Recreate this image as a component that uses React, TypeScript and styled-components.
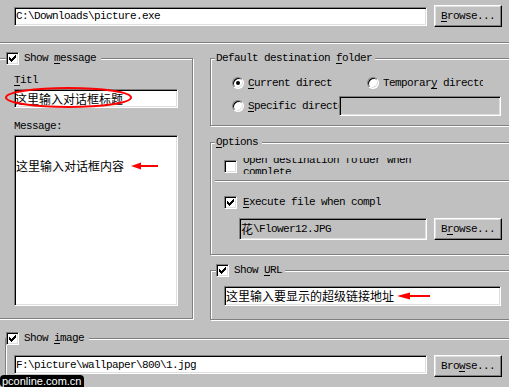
import React from "react";
import styled, { createGlobalStyle } from "styled-components";

const FACE = "#c0c0c0";
const SHADOW = "#808080";
const LATIN = `"Liberation Mono", "DejaVu Sans Mono", monospace`;
const CJK = `"Noto Sans CJK SC", "Noto Sans CJK TC", sans-serif`;

const GlobalStyle = createGlobalStyle`
  html, body {
    margin: 0;
    padding: 0;
    background: ${FACE};
  }
  body {
    width: 509px;
    height: 387px;
    overflow: hidden;
  }
`;

const Dialog = styled.div`
  position: relative;
  width: 509px;
  height: 387px;
  overflow: hidden;
  background: ${FACE};
  color: #000;
  font-family: ${LATIN};
  font-size: 11px;
  letter-spacing: -0.6px;
  line-height: 14px;
`;

const Cjk = styled.span`
  font-family: ${CJK};
  font-size: 12px;
  letter-spacing: 0;
`;

const Key = styled.u`
  text-decoration: underline;
  text-underline-offset: 2px;
`;

const TopBar = styled.div`
  display: flex;
  align-items: center;
  gap: 7px;
  padding: 5px 0 0 14px;
`;

const Separator = styled.div<{ $mt?: number; $ml?: number }>`
  height: 0;
  margin: ${(p) => p.$mt ?? 0}px 0 0 ${(p) => p.$ml ?? 0}px;
  border-top: 1px solid ${SHADOW};
  border-bottom: 1px solid #fff;
`;

const TextBox = styled.div<{ $w: number; $h: number; $grey?: boolean; $pl?: number }>`
  box-sizing: border-box;
  flex: none;
  width: ${(p) => p.$w}px;
  height: ${(p) => p.$h}px;
  display: flex;
  align-items: center;
  padding-left: ${(p) => p.$pl ?? 1}px;
  overflow: hidden;
  white-space: nowrap;
  background: ${(p) => (p.$grey ? FACE : "#fff")};
  border: 1px solid;
  border-color: ${SHADOW} #fff #fff ${SHADOW};
  box-shadow: inset 1px 1px 0 #000, inset -1px -1px 0 #dfdfdf;
`;

const MessageBox = styled.div`
  box-sizing: border-box;
  width: 164px;
  height: 171px;
  margin-top: 2px;
  padding: 23px 0 0 0;
  background: #fff;
  border: 1px solid;
  border-color: ${SHADOW} #fff #fff ${SHADOW};
  box-shadow: inset 1px 1px 0 #000, inset -1px -1px 0 #dfdfdf;
  display: flex;
  flex-direction: column;
`;

const InkLine = styled.div`
  display: flex;
  align-items: center;
  height: 14px;
  padding-left: 1px;
  white-space: nowrap;
`;

const Button = styled.div`
  box-sizing: border-box;
  flex: none;
  width: 68px;
  height: 22px;
  display: flex;
  align-items: center;
  justify-content: center;
  background: ${FACE};
  border: 1px solid;
  border-color: #fff #000 #000 #fff;
  box-shadow: inset -1px -1px 0 ${SHADOW}, inset 1px 1px 0 #dfdfdf;
`;

const Middle = styled.div`
  display: flex;
  align-items: flex-start;
  margin-top: 8px;
`;

const Column = styled.div`
  display: flex;
  flex-direction: column;
  margin-left: 17px;
`;

const Group = styled.fieldset<{ $w: number; $ml?: number; $mt?: number }>`
  box-sizing: border-box;
  width: ${(p) => p.$w}px;
  min-width: 0;
  flex: none;
  margin: ${(p) => p.$mt ?? 0}px 0 0 ${(p) => p.$ml ?? 0}px;
  padding: 0;
  border: 1px solid ${SHADOW};
  box-shadow: 1px 1px 0 #fff, inset 1px 1px 0 #fff;
`;

const Legend = styled.legend<{ $ml: number; $pl?: number; $pr: number }>`
  height: 13px;
  margin-left: ${(p) => p.$ml}px;
  padding: 0 ${(p) => p.$pr}px 0 ${(p) => p.$pl ?? 0}px;
  background: ${FACE};
  line-height: 13px;
`;

const LegendInner = styled.span`
  display: flex;
  align-items: center;
  gap: 5px;
  height: 13px;
  white-space: nowrap;
`;

const GroupBody = styled.div<{ $pt: number; $pb: number; $pl?: number; $pr?: number }>`
  padding: ${(p) => p.$pt}px ${(p) => p.$pr ?? 0}px ${(p) => p.$pb}px ${(p) => p.$pl ?? 0}px;
`;

const Row = styled.div<{ $indent?: number; $mt?: number; $h?: number; $gap?: number }>`
  display: flex;
  align-items: center;
  gap: ${(p) => p.$gap ?? 0}px;
  margin-top: ${(p) => p.$mt ?? 0}px;
  padding-left: ${(p) => p.$indent ?? 0}px;
  height: ${(p) => (p.$h ? `${p.$h}px` : "auto")};
  white-space: nowrap;
`;

const Caption = styled.div<{ $mt?: number }>`
  height: 14px;
  margin-top: ${(p) => p.$mt ?? 0}px;
  white-space: nowrap;
`;

const Clip = styled.span<{ $w: number; $ml?: number }>`
  display: block;
  flex: none;
  width: ${(p) => p.$w}px;
  margin-left: ${(p) => p.$ml ?? 0}px;
  overflow: hidden;
  white-space: nowrap;
`;

const CutLabel = styled.span`
  display: block;
  flex: none;
  width: 180px;
  height: 16px;
  margin-left: 6px;
  overflow: hidden;
`;

const CutText = styled.span`
  display: block;
  margin-top: -4px;
  line-height: 12px;
  white-space: normal;
`;

const CheckBoxFace = styled.span`
  box-sizing: border-box;
  flex: none;
  width: 13px;
  height: 13px;
  display: flex;
  align-items: center;
  justify-content: center;
  background: #fff;
  border: 1px solid;
  border-color: ${SHADOW} #fff #fff ${SHADOW};
  box-shadow: inset 1px 1px 0 #000, inset -1px -1px 0 #dfdfdf;
`;

const RadioFace = styled.span<{ $on?: boolean; $ml?: number }>`
  box-sizing: border-box;
  flex: none;
  width: 12px;
  height: 12px;
  margin-left: ${(p) => p.$ml ?? 0}px;
  margin-right: 4px;
  display: flex;
  align-items: center;
  justify-content: center;
  border-radius: 50%;
  background: #fff;
  border: 1px solid;
  border-color: ${SHADOW} #fff #fff ${SHADOW};
  box-shadow: inset 1px 1px 0 #000, inset -1px -1px 0 #dfdfdf;

  &::after {
    content: "";
    display: ${(p) => (p.$on ? "block" : "none")};
    width: 4px;
    height: 4px;
    border-radius: 50%;
    background: #000;
  }
`;

const TitleWrap = styled.div`
  position: relative;
  width: 164px;
  margin-top: 2px;
`;

const Ellipse = styled.svg`
  position: absolute;
  left: -9px;
  top: -2px;
  overflow: visible;
`;

const Arrow = styled.svg<{ $ml: number }>`
  flex: none;
  margin-left: ${(p) => p.$ml}px;
`;

const Watermark = styled.div`
  position: absolute;
  left: 0;
  bottom: 0;
  height: 12px;
  padding: 0 2px 0 2px;
  border-radius: 4px 4px 0 4px;
  background: #000;
  color: #fff;
  font-family: "Liberation Sans", Arial, sans-serif;
  font-size: 11px;
  letter-spacing: 0;
  line-height: 12px;
`;

const CheckBox: React.FC<{ checked?: boolean }> = ({ checked }) => (
  <CheckBoxFace>
    {checked && (
      <svg width="7" height="7" viewBox="0 0 7 7" shapeRendering="crispEdges">
        <path
          d="M6 0h1v1h-1z M5 1h2v1h-2z M0 2h1v1h-1z M4 2h3v1h-3z M0 3h2v1h-2z M3 3h3v1h-3z M0 4h5v1h-5z M1 5h3v1h-3z M2 6h1v1h-1z"
          fill="#000"
        />
      </svg>
    )}
  </CheckBoxFace>
);

const RedArrow: React.FC<{ width: number; head: number; ml: number }> = ({ width, head, ml }) => (
  <Arrow $ml={ml} width={width} height="8" viewBox={`0 0 ${width} 8`}>
    <path d={`M0 4 L${head} 0.5 L${head} 7.5 Z`} fill="#ff0000" />
    <rect x={head - 1} y="3" width={width - head + 1} height="2" fill="#ff0000" />
  </Arrow>
);

export default function App() {
  return (
    <>
      <GlobalStyle />
      <Dialog>
        <TopBar>
          <TextBox $w={413} $h={19}>{"C:\\Downloads\\picture.exe"}</TextBox>
          <Button>
            <span>
              <Key>B</Key>rowse...
            </span>
          </Button>
        </TopBar>
        <Separator $mt={15} />

        <Middle>
          <Group $w={196} $ml={-3}>
            <Legend $ml={8} $pr={5}>
              <LegendInner>
                <CheckBox checked />
                <span>
                  Show <Key>m</Key>essage
                </span>
              </LegendInner>
            </Legend>
            <GroupBody $pt={8} $pb={12} $pl={16} $pr={14}>
              <Caption>
                <Key>T</Key>itl
              </Caption>
              <TitleWrap>
                <TextBox $w={164} $h={19} $pl={0}>
                  <Cjk>这里输入对话框标题</Cjk>
                </TextBox>
                <Ellipse width="127" height="21" viewBox="0 0 127 21">
                  <ellipse cx="63.5" cy="10.5" rx="62.5" ry="9.5" fill="none" stroke="#ff0000" strokeWidth="2" />
                </Ellipse>
              </TitleWrap>
              <Caption $mt={11}>Message:</Caption>
              <MessageBox>
                <InkLine>
                  <Cjk>这里输入对话框内容</Cjk>
                  <RedArrow width={27} head={10} ml={7} />
                </InkLine>
              </MessageBox>
            </GroupBody>
          </Group>

          <Column>
            <Group $w={305}>
              <Legend $ml={4} $pl={1} $pr={3}>
                <LegendInner>
                  <span>
                    Default destination <Key>f</Key>older
                  </span>
                </LegendInner>
              </Legend>
              <GroupBody $pt={11} $pb={9}>
                <Row $indent={21} $h={14}>
                  <RadioFace $on />
                  <Clip $w={84}>
                    <Key>C</Key>urrent directory
                  </Clip>
                  <RadioFace $ml={35} />
                  <Clip $w={100}>
                    Temporar<Key>y</Key> directory
                  </Clip>
                </Row>
                <Row $indent={21} $mt={6} $h={20}>
                  <RadioFace />
                  <Clip $w={91}>
                    <Key>S</Key>pecific directory
                  </Clip>
                  <TextBox $w={162} $h={20} $grey />
                </Row>
              </GroupBody>
            </Group>

            <Group $w={305} $mt={10}>
              <Legend $ml={4} $pl={1} $pr={4}>
                <LegendInner>
                  <span>
                    <Key>O</Key>ptions
                  </span>
                </LegendInner>
              </Legend>
              <GroupBody $pt={9} $pb={14}>
                <Row $indent={13} $h={16}>
                  <CheckBox />
                  <CutLabel>
                    <CutText>Open destination folder when complete</CutText>
                  </CutLabel>
                </Row>
                <Separator $mt={6} $ml={4} />
                <Row $indent={13} $mt={13} $h={14}>
                  <CheckBox checked />
                  <Clip $w={138} $ml={6}>
                    <Key>E</Key>xecute file when complete
                  </Clip>
                </Row>
                <Row $indent={28} $mt={9} $gap={7}>
                  <TextBox $w={188} $h={22} $grey>
                    <Cjk>花</Cjk>
                    {"\\Flower12.JPG"}
                  </TextBox>
                  <Button>
                    <span>
                      B<Key>r</Key>owse...
                    </span>
                  </Button>
                </Row>
              </GroupBody>
            </Group>

            <Group $w={305} $mt={9}>
              <Legend $ml={5} $pr={3}>
                <LegendInner>
                  <CheckBox checked />
                  <span>
                    Show <Key>U</Key>RL
                  </span>
                </LegendInner>
              </Legend>
              <GroupBody $pt={9} $pb={13}>
                <Row $indent={13}>
                  <TextBox $w={277} $h={20}>
                    <Cjk>这里输入要显示的超级链接地址</Cjk>
                    <RedArrow width={33} head={13} ml={3} />
                  </TextBox>
                </Row>
              </GroupBody>
            </Group>
          </Column>
        </Middle>

        <Group $w={510} $ml={5} $mt={12}>
          <Legend $ml={0} $pr={5}>
            <LegendInner>
              <CheckBox checked />
              <span>
                Show <Key>i</Key>mage
              </span>
            </LegendInner>
          </Legend>
          <GroupBody $pt={10} $pb={20}>
            <Row $indent={8} $gap={7} style={{ alignItems: "flex-start" }}>
              <TextBox $w={413} $h={19}>{"F:\\picture\\wallpaper\\800\\1.jpg"}</TextBox>
              <Button>
                <span>
                  Bro<Key>w</Key>se...
                </span>
              </Button>
            </Row>
          </GroupBody>
        </Group>

        <Watermark>pconline.com.cn</Watermark>
      </Dialog>
    </>
  );
}
